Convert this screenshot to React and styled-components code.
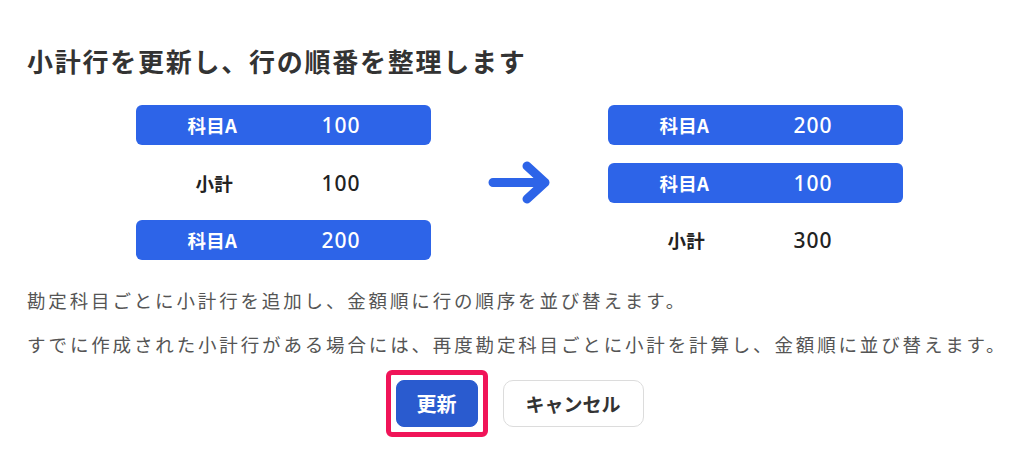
import React from "react";
import styled, { createGlobalStyle } from "styled-components";

const Global = createGlobalStyle`
  html, body { margin: 0; padding: 0; background: #fff; }
  body { font-family: "Noto Sans CJK JP", "Noto Sans", sans-serif; }
`;

const Page = styled.div`
  width: 1036px;
  height: 455px;
  box-sizing: border-box;
  padding: 43px 27px 0;
  background: #fff;
  overflow: hidden;
`;

const Title = styled.h1`
  margin: 0;
  font-size: 26px;
  line-height: 36px;
  font-weight: 700;
  color: #333;
  letter-spacing: 1.75px;
`;

const Diagram = styled.div`
  margin-top: 26px;
  display: flex;
  justify-content: center;
  align-items: center;
  gap: 57px;
  padding-left: 2px;
`;

const Column = styled.div`
  display: flex;
  flex-direction: column;
  gap: 17.5px;
  width: 295px;
`;

const Row = styled.div`
  height: 40px;
  box-sizing: border-box;
  display: flex;
  align-items: center;
  padding-left: 52px;
  border-radius: 6px;
  background: ${(p) => (p.$highlight ? "#2d64e8" : "transparent")};
  color: ${(p) => (p.$highlight ? "#fff" : "#222")};
`;

const Label = styled.span`
  width: 134px;
  padding-left: ${(p) => (p.$highlight ? "0" : "8px")};
  box-sizing: border-box;
  font-size: 18.5px;
  font-weight: 700;
  letter-spacing: 0.3px;
`;

const Value = styled.span`
  font-family: "Noto Sans", "Noto Sans CJK JP", sans-serif;
  font-size: 21px;
  font-weight: 500;
  letter-spacing: 1px;
`;

const Arrow = styled.svg`
  width: 63px;
  height: 43px;
  flex: none;
`;

const Text = styled.p`
  margin: 0;
  font-size: 18.5px;
  line-height: 44px;
  color: #555;
  letter-spacing: 2.85px;
  font-weight: 400;
  white-space: nowrap;
`;

const TextBlock = styled.div`
  margin-top: 18px;
`;

const Buttons = styled.div`
  margin-top: 4px;
  display: flex;
  justify-content: center;
  align-items: center;
  gap: 15px;
  padding-right: 7px;
`;

const Highlight = styled.div`
  border: 5px solid #f01458;
  border-radius: 6px;
  padding: 5px;
  display: flex;
`;

const Button = styled.button`
  height: 47px;
  box-sizing: border-box;
  border-radius: ${(p) => (p.$primary ? "8px" : "10px")};
  border: 1px solid ${(p) => (p.$primary ? "#2a5bcf" : "#dcdcdc")};
  background: ${(p) => (p.$primary ? "#2a5bcf" : "#fff")};
  color: ${(p) => (p.$primary ? "#fff" : "#333")};
  font-family: "Noto Sans CJK JP", sans-serif;
  font-size: ${(p) => (p.$primary ? "20px" : "19px")};
  font-weight: 700;
  padding: 0;
  width: ${(p) => (p.$primary ? "82px" : "141px")};
  cursor: pointer;
`;

const before = [
  { label: "科目A", value: "100", hl: true },
  { label: "小計", value: "100", hl: false },
  { label: "科目A", value: "200", hl: true },
];
const after = [
  { label: "科目A", value: "200", hl: true },
  { label: "科目A", value: "100", hl: true },
  { label: "小計", value: "300", hl: false },
];

function Col({ rows }) {
  return (
    <Column>
      {rows.map((r, i) => (
        <Row key={i} $highlight={r.hl}>
          <Label $highlight={r.hl}>{r.label}</Label>
          <Value>{r.value}</Value>
        </Row>
      ))}
    </Column>
  );
}

export default function App() {
  return (
    <>
      <Global />
      <Page>
        <Title>小計行を更新し、行の順番を整理します</Title>
        <Diagram>
          <Col rows={before} />
          <Arrow viewBox="0 0 63 43">
            <path
              d="M5 21.5 H57 M39 5 L57 21.5 L39 38"
              fill="none"
              stroke="#2d64e8"
              strokeWidth="9"
              strokeLinecap="round"
              strokeLinejoin="round"
            />
          </Arrow>
          <Col rows={after} />
        </Diagram>
        <TextBlock>
          <Text>勘定科目ごとに小計行を追加し、金額順に行の順序を並び替えます。</Text>
          <Text>すでに作成された小計行がある場合には、再度勘定科目ごとに小計を計算し、金額順に並び替えます。</Text>
        </TextBlock>
        <Buttons>
          <Highlight>
            <Button $primary>更新</Button>
          </Highlight>
          <Button>キャンセル</Button>
        </Buttons>
      </Page>
    </>
  );
}
